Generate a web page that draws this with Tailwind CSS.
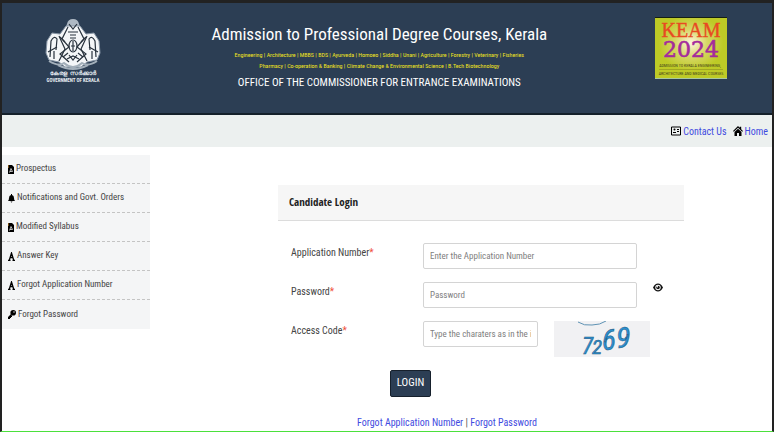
<!DOCTYPE html>
<html lang="en">
<head>
    <meta charset="UTF-8">
    <meta name="viewport" content="width=device-width, initial-scale=1.0">
    <title>Admission to Professional Degree Courses, Kerala</title>
    <script src="https://cdn.jsdelivr.net/npm/@tailwindcss/browser@4"></script>
</head>
<body class="bg-white">
<div class="min-h-screen flex flex-col border-x-2 border-t-3 border-b border-[#222222] border-b-[#4be03c] font-['Roboto_Condensed','Roboto',sans-serif] text-[10px] text-[#444444]">

    <!-- Banner -->
    <header class="grid grid-cols-[19%_1fr_21%] bg-[#2c3e54] h-[112px] border-b-2 border-[#14202a] text-white">
        <div class="flex justify-center pt-4 pr-1">
            <svg class="w-[60px] h-[66px]" viewBox="0 0 60 66" role="img" aria-label="Government of Kerala">
                <!-- Emblem: two elephants, crest and conch -->
                <path fill="#aeb9c4" d="M24 5q1-5 6-5t6 5l2 5H22z"/>
                <path fill="#f4f6f8" stroke="#8795a5" d="M23 7h14l6 8 8-1 5 8 1 12-3 7-10 2-6 5H22l-6-5-10-2-3-7 1-12 5-8 8 1z"/>
                <g fill="none" stroke="#27313c" stroke-width="1.2">
                    <path d="M25 8l-6 12 7 8-9 7 9 8M35 8l6 12-7 8 9 7-9 8M26 5l4 5 4-5M25 13h10M27 16h6M27 19h6"/>
                    <path d="M16 17l6 13-6 12M44 17l-6 13 6 12M5 33l9-5M55 33l-9-5"/>
                    <path d="M7 38l1-16q3-6 6-2l-1 11M53 38l-1-16q-3-6-6-2l1 11M11 40v-8M49 40v-8"/>
                    <path d="M22 23l-5-5M38 23l5-5M25 34l-5 4M35 34l5 4M24 40l6-3 6 3"/>
                    <ellipse cx="30" cy="27" rx="4" ry="6"/>
                    <path d="M30 22v10M28 27h4M26 36l4 5 4-5"/>
                </g>
                <path d="M6 42q10 6 15 2 9 8 18 0 6 4 15-2M15 46q15 8 30 0" fill="none" stroke="#a3afba" stroke-width="2"/>
                <text x="30" y="56" text-anchor="middle" font-size="6" font-weight="700" fill="#e6ebf0">കേരള&nbsp;&nbsp;സർക്കാർ</text>
                <text x="30" y="63" text-anchor="middle" font-size="5" font-weight="700" fill="#e6ebf0">GOVERNMENT OF KERALA</text>
            </svg>
        </div>
        <div class="text-center whitespace-nowrap pt-5">
            <h1 class="text-[17px] leading-[22px]">Admission to Professional Degree Courses, Kerala</h1>
            <p class="pt-1 text-[6px] leading-[11px] text-[#f3e51c]">Engineering | Architecture | MBBS | BDS | Ayurveda | Homoeo | Siddha | Unani | Agriculture | Forestry | Veterinary | Fisheries<br>Pharmacy | Co-operation &amp; Banking | Climate Change &amp; Environmental Science | B.Tech Biotechnology</p>
            <p class="pt-1 text-[11px] leading-4">OFFICE OF THE COMMISSIONER FOR ENTRANCE EXAMINATIONS</p>
        </div>
        <div class="flex justify-center pt-3.5">
            <svg class="w-[72px] h-[62px]" viewBox="0 0 72 62" role="img" aria-label="KEAM 2024">
                <defs>
                    <radialGradient id="glow" cx="50%" cy="42%" r="45%">
                        <stop offset="0" stop-color="#fff6df"/>
                        <stop offset="0.5" stop-color="#d6d765"/>
                        <stop offset="1" stop-color="#bdca26"/>
                    </radialGradient>
                </defs>
                <rect width="72" height="62" fill="url(#glow)"/>
                <path d="M0 .5h72" stroke="#151f12"/>
                <path d="M0 61.5h72" stroke="#a9c9a0"/>
                <text x="36" y="20" text-anchor="middle" font-family="Liberation Serif" font-size="20" fill="#e84a22" stroke="#e84a22" stroke-width=".4">KEAM</text>
                <text x="36" y="40" text-anchor="middle" font-family="DejaVu Serif" font-size="22" fill="#a42c9c" stroke="#a42c9c" stroke-width=".6">2024</text>
                <g font-size="4" fill="#45421a" text-anchor="middle">
                    <text x="35" y="50">ADMISSION TO KERALA ENGINEERING,</text>
                    <text x="36" y="58">ARCHITECTURE AND MEDICAL COURSES</text>
                </g>
                <path d="M4 52.5h64" stroke="#8d8e22" stroke-width=".6"/>
            </svg>
        </div>
    </header>

    <!-- Top links -->
    <nav class="flex justify-end items-center gap-1.5 h-8 pr-1 bg-[#ecf0ef] text-[#3f4be0]">
        <a href="#" class="flex items-center gap-0.5">
            <svg class="w-[10px] h-[10px] text-black" viewBox="0 0 10 10" fill="none" stroke="currentColor"><path d="M.5 1h9v8h-9z"/><circle cx="3.5" cy="3.5" r="1" fill="currentColor" stroke="none"/><path d="M2 6.5h3M6 3.5h2M6 5.5h2"/></svg>
            Contact Us
        </a>
        <a href="#" class="flex items-center gap-0.5">
            <svg class="w-[10px] h-[10px] text-black" viewBox="0 0 10 10" fill="currentColor"><path d="M5 0l1.7 1.7V.7h1.5v2.5L10 5l-.8.8L5 1.7.8 5.8 0 5z"/><path d="M1.5 6L5 2.7 8.5 6v4H6V7H4v3H1.5z"/></svg>
            Home
        </a>
    </nav>

    <div class="flex flex-1">
        <!-- Side menu -->
        <aside class="w-[148px] shrink-0 mt-2">
            <ul class="bg-[#f4f5f6] text-[9px]">
                <li><a href="#" class="flex items-center gap-0.5 h-[29px] pl-1.5 border-b border-dashed border-[#c4c4c4]">
                    <svg class="w-[6px] h-[9px] text-black" viewBox="0 0 6 9"><path d="M0 0h4l2 2v7H0z" fill="currentColor"/><path d="M1.5 7.5L3 3.5l1.5 3H2" fill="none" stroke="#fff" stroke-width=".7"/><path d="M0 0v3" stroke="#e89a28"/></svg>
                    Prospectus</a></li>
                <li><a href="#" class="flex items-center gap-0.5 h-[29px] pl-1.5 border-b border-dashed border-[#c4c4c4]">
                    <svg class="w-[7px] h-[9px] text-black" viewBox="0 0 7 9" fill="currentColor"><path d="M3 0h1v1q2 .5 2 3 0 2 1 3H0q1-1 1-3 0-2.5 2-3zM2.5 7.5h2q-1 2-2 0z"/></svg>
                    Notifications and Govt. Orders</a></li>
                <li><a href="#" class="flex items-center gap-0.5 h-[29px] pl-1.5 border-b border-dashed border-[#c4c4c4]">
                    <svg class="w-[6px] h-[9px] text-black" viewBox="0 0 6 9"><path d="M0 0h4l2 2v7H0z" fill="currentColor"/><path d="M1.5 7.5L3 3.5l1.5 3H2" fill="none" stroke="#fff" stroke-width=".7"/><path d="M0 0v3" stroke="#e89a28"/></svg>
                    Modified Syllabus</a></li>
                <li><a href="#" class="flex items-center gap-0.5 h-[29px] pl-1.5 border-b border-dashed border-[#c4c4c4]">
                    <svg class="w-[7px] h-[9px] text-black" viewBox="0 0 7 9" fill="none" stroke="currentColor"><path d="M0 8.5h2.5M4.500 8.500H7M1.2 8.5L3.5 1l2.3 7.5M2 5.5h3" stroke-width="1.3"/></svg>
                    Answer Key</a></li>
                <li><a href="#" class="flex items-center gap-0.5 h-[29px] pl-1.5 border-b border-dashed border-[#c4c4c4]">
                    <svg class="w-[7px] h-[9px] text-black" viewBox="0 0 7 9" fill="none" stroke="currentColor"><path d="M0 8.5h2.5M4.5 8.5H7M1.2 8.5L3.5 1l2.3 7.5M2 5.5h3" stroke-width="1.3"/></svg>
                    Forgot Application Number</a></li>
                <li><a href="#" class="flex items-center gap-0.5 h-[29px] pl-1.5">
                    <svg class="w-[8px] h-[9px] text-black" viewBox="0 0 8 9"><path d="M3 4L0 7v2h2V8h1V7h1V6z" fill="currentColor"/><circle cx="5.2" cy="2.8" r="2.8" fill="currentColor"/><circle cx="6" cy="2" r=".7" fill="#fff"/></svg>
                    Forgot Password</a></li>
            </ul>
        </aside>

        <!-- Login card -->
        <main class="flex-1 pt-[38px] pl-[128px] pr-[88px]">
            <h2 class="h-9 flex items-center pl-[11px] bg-[#f6f6f6] border-b border-[#dcdcdc] font-['Open_Sans_Condensed','Open_Sans',sans-serif] text-[11px] font-bold text-[#222222]">Candidate Login</h2>
            <form class="pt-[22px] pl-[13px]">
                <div class="grid grid-cols-[132px_214px_1fr] gap-y-[13px]">
                    <label for="appno" class="pt-0.5">Application Number<span class="text-[#f0503c]">*</span></label>
                    <input id="appno" type="text" placeholder="Enter the Application Number" class="h-[26px] px-1.5 border border-[#d4d4d4] rounded-xs bg-white text-[9px] placeholder-[#808080]">
                    <span></span>

                    <label for="pwd" class="pt-0.5">Password<span class="text-[#f0503c]">*</span></label>
                    <input id="pwd" type="password" placeholder="Password" class="h-[26px] px-1.5 border border-[#d4d4d4] rounded-xs bg-white text-[9px] placeholder-[#808080]">
                    <button type="button" aria-label="Show password" class="ml-4 mt-px w-[10px] h-[9px]">
                        <svg class="w-[10px] h-[9px]" viewBox="0 0 10 9"><path d="M0 4.5Q2 .5 5 .5t5 4q-2 4-5 4t-5-4z" fill="#111"/><circle cx="5" cy="4.5" r="2.7" fill="#fff"/><circle cx="5" cy="4.5" r="1.8" fill="#111"/><circle cx="4.3" cy="3.7" r=".8" fill="#fff"/></svg>
                    </button>

                    <label for="code" class="pt-0.5">Access Code<span class="text-[#f0503c]">*</span></label>
                    <div class="col-span-2 flex items-start gap-4">
                        <input id="code" type="text" placeholder="Type the charaters as in the image" class="w-[115px] h-[26px] px-1.5 border border-[#d4d4d4] rounded-xs bg-white text-[9px] placeholder-[#808080]">
                        <svg class="w-[96px] h-[36px] bg-[#f1f1f3]" viewBox="0 0 96 36" role="img" aria-label="Access code 7269">
                            <path d="M24 1q6 4 14 3 8 0 14-4" fill="none" stroke="#5f93b4" stroke-width="1"/>
                            <text font-style="italic" fill="#2a8fd0" stroke="#285a80" stroke-width=".5"><tspan x="28" y="33" font-size="23">7</tspan><tspan x="38" y="33" font-size="21">2</tspan><tspan x="48" y="29" font-size="29">6</tspan><tspan x="62" y="27" font-size="30">9</tspan></text>
                        </svg>
                    </div>
                </div>
                <div class="pt-[13px] pl-[99px]">
                    <button type="submit" class="w-[41px] h-[27px] rounded-xs border border-[#16202c] bg-[#2c3e54] text-white text-[11px]">LOGIN</button>
                </div>
                <p class="pt-[18px] pl-[66px] leading-4 text-[#3f4be0]"><a href="#">Forgot Application Number</a> <span class="text-[#555555]">|</span> <a href="#">Forgot Password</a></p>
            </form>
        </main>
    </div>
</div>
</body>
</html>
